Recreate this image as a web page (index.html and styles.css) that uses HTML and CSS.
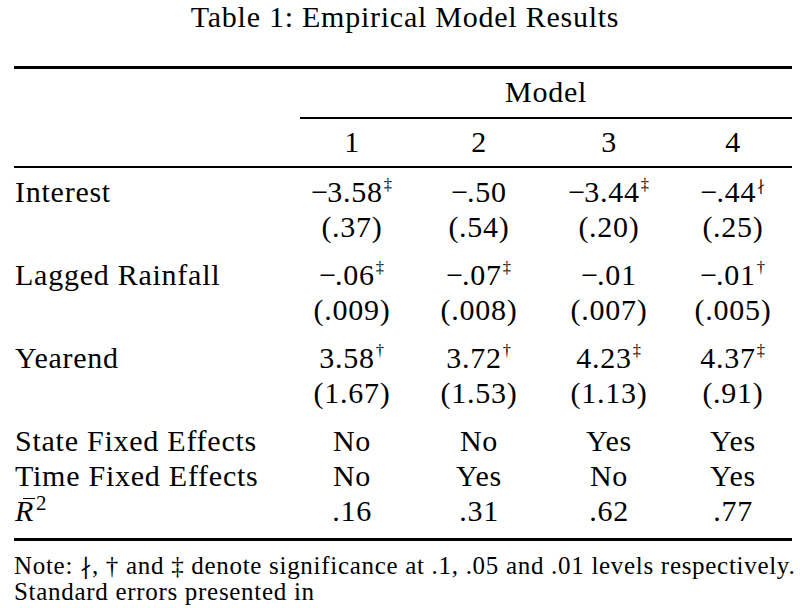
FILE: index.html
```html
<!DOCTYPE html>
<html>
<head>
<meta charset="utf-8">
<link rel="stylesheet" href="styles.css">
</head>
<body>
<div class="page">
  <div class="caption">Table 1: Empirical Model Results</div>
  <div class="table">
    <div class="rule rule-top"></div>
    <div class="row row-model"><div class="lbl"></div><div class="span4">Model</div></div>
    <div class="cmid"></div>
    <div class="row row-heads">
      <div class="lbl"></div><div class="c">1</div><div class="c">2</div><div class="c">3</div><div class="c">4</div>
    </div>
    <div class="rule rule-mid"></div>
    <div class="group group-first">
      <div class="row">
        <div class="lbl">Interest</div>
        <div class="c"><span class="m">−</span>3.58<sup>‡</sup></div>
        <div class="c"><span class="m">−</span>.50</div>
        <div class="c"><span class="m">−</span>3.44<sup>‡</sup></div>
        <div class="c"><span class="m">−</span>.44<sup class="nm">∤</sup></div>
      </div>
      <div class="row">
        <div class="lbl"></div>
        <div class="c">(.37)</div><div class="c">(.54)</div><div class="c">(.20)</div><div class="c">(.25)</div>
      </div>
    </div>
    <div class="group">
      <div class="row">
        <div class="lbl">Lagged Rainfall</div>
        <div class="c"><span class="m">−</span>.06<sup>‡</sup></div>
        <div class="c"><span class="m">−</span>.07<sup>‡</sup></div>
        <div class="c"><span class="m">−</span>.01</div>
        <div class="c"><span class="m">−</span>.01<sup>†</sup></div>
      </div>
      <div class="row">
        <div class="lbl"></div>
        <div class="c">(.009)</div><div class="c">(.008)</div><div class="c">(.007)</div><div class="c">(.005)</div>
      </div>
    </div>
    <div class="group">
      <div class="row">
        <div class="lbl">Yearend</div>
        <div class="c">3.58<sup>†</sup></div>
        <div class="c">3.72<sup>†</sup></div>
        <div class="c">4.23<sup>‡</sup></div>
        <div class="c">4.37<sup>‡</sup></div>
      </div>
      <div class="row">
        <div class="lbl"></div>
        <div class="c">(1.67)</div><div class="c">(1.53)</div><div class="c">(1.13)</div><div class="c">(.91)</div>
      </div>
    </div>
    <div class="group">
      <div class="row">
        <div class="lbl">State Fixed Effects</div>
        <div class="c">No</div><div class="c">No</div><div class="c">Yes</div><div class="c">Yes</div>
      </div>
      <div class="row">
        <div class="lbl">Time Fixed Effects</div>
        <div class="c">No</div><div class="c">Yes</div><div class="c">No</div><div class="c">Yes</div>
      </div>
      <div class="row">
        <div class="lbl"><span class="rbar">R</span><sup class="sq">2</sup></div>
        <div class="c">.16</div><div class="c">.31</div><div class="c">.62</div><div class="c">.77</div>
      </div>
    </div>
    <div class="rule rule-bottom"></div>
  </div>
  <div class="note">Note: <span class="nmid">∤</span>, † and ‡ denote significance at .1, .05 and .01 levels respectively.<br>Standard errors presented in</div>
</div>
</body>
</html>
```

FILE: styles.css
```css
html, body {
  margin: 0;
  padding: 0;
  background: #fff;
}
body {
  font-family: "Liberation Serif", "Times New Roman", serif;
  color: #000;
  font-size: 30px;
  letter-spacing: 0.75px;
}
.page {
  width: 800px;
  height: 608px;
  overflow: hidden;
}
.caption {
  text-align: center;
  line-height: 34px;
  height: 34px;
  padding-left: 10px;
}
.table {
  margin: 32px 0 0 14px;
  width: 778px;
}
.rule {
  background: #000;
}
.rule-top {
  height: 3px;
  margin-bottom: 5px;
}
.rule-mid {
  height: 2px;
  margin: 7px 0 6px 0;
}
.rule-bottom {
  height: 3px;
  margin-top: 10px;
}
.cmid {
  height: 1.5px;
  background: #000;
  margin: 8px 0 5px 286px;
}
.row {
  display: grid;
  grid-template-columns: 276px 124px 130px 130px 118px;
  line-height: 35px;
  height: 35px;
}
.lbl {
  padding-left: 1px;
  white-space: nowrap;
}
.c {
  text-align: center;
  white-space: nowrap;
}
.span4 {
  grid-column: 2 / 6;
  text-align: center;
  padding-left: 10px;
}
.group + .group {
  margin-top: 13px;
}
.m {
  letter-spacing: -1px;
}
sup {
  font-size: 0.55em;
  line-height: 0;
  vertical-align: 0.7em;
  margin-left: 1px;
}
sup.nm {
  font-family: "DejaVu Sans", sans-serif;
  font-size: 0.5em;
}
.rbar {
  font-style: italic;
  position: relative;
}
.rbar::before {
  content: "";
  position: absolute;
  left: 8px;
  width: 12px;
  top: 4px;
  border-top: 1.5px solid #000;
}
sup.sq {
  font-size: 0.7em;
  vertical-align: 0.5em;
  margin-left: 2px;
}
.note {
  margin: 12px 0 0 14px;
  font-size: 25px;
  line-height: 25px;
  letter-spacing: 0.7px;
  white-space: nowrap;
}
.nmid {
  font-family: "DejaVu Sans", sans-serif;
  font-size: 0.9em;
}
```
